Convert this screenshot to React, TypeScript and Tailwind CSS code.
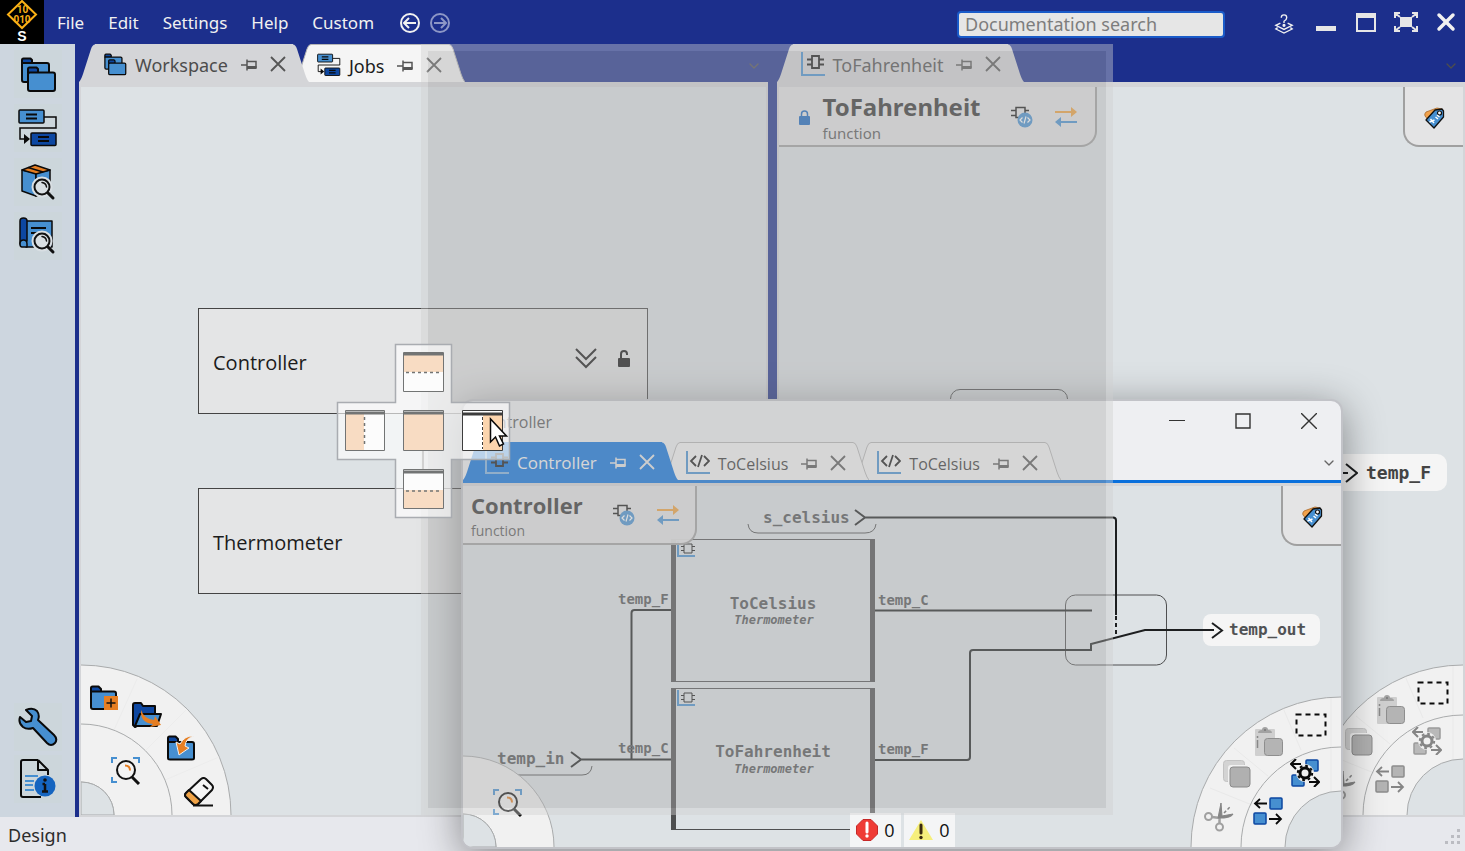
import type { ReactNode } from "react";
import { ChevronDown, X } from "lucide-react";

interface IconProps {
  className?: string;
}

const BLUE = "#468fd0";
const NAVY = "#0d47a1";
const ORANGE = "#e67e22";

/* ---------- icons ---------- */

function Logo() {
  return (
    <svg viewBox="0 0 44 44" className="h-11 w-11 bg-black">
      <path d="M22 1 36 14.500 22 28 8 14.500Z" fill="none" stroke="#fbb116" strokeWidth="2" />
      <g fill="#fbb116" fontFamily="Roboto, sans-serif" fontWeight="700" fontSize="10" textAnchor="middle">
        <text x="22.500" y="13">10</text>
        <text x="22" y="23">010</text>
      </g>
      <text x="22" y="41" textAnchor="middle" fill="#fff" fontFamily="Liberation Sans, sans-serif" fontWeight="700" fontSize="14">S</text>
    </svg>
  );
}

function FoldersIcon({ className }: IconProps) {
  return (
    <svg viewBox="0 0 38 38" className={className} stroke="#0a0a0a" strokeWidth="2" strokeLinejoin="round">
      <path d="M3 8V5q0-1.500 1.500-1.500h7L13 5v3z" fill={NAVY} />
      <path d="M3 8h25q2 0 2 2v17H5q-2 0-2-2z" fill={BLUE} />
      <path d="M9 18v-4q0-1.500 1.500-1.500h7L19 14v4z" fill={NAVY} />
      <path d="M11 17.500h23q2 0 2 2V34q0 2-2 2H11q-2 0-2-2V19.500q0-2 2-2z" fill={BLUE} />
    </svg>
  );
}

function JobsIcon({ className }: IconProps) {
  return (
    <svg viewBox="0 0 40 38" className={className} fill="none" stroke="#0a0a0a" strokeWidth="1.500">
      <path d="M26 8h12v11H2v11h5" />
      <rect x="1" y="1" width="25" height="13" rx="1" fill={BLUE} />
      <rect x="13" y="24" width="25" height="12.500" rx="1" fill={NAVY} />
      <path d="M8 5.500h11M8 9.500h11M20 28h11M20 32h11" strokeWidth="2" />
      <path d="M6 25v10l6-5z" fill="#0a0a0a" stroke="none" />
    </svg>
  );
}

function Lens({ halo }: { halo: string }) {
  return (
    <g fill="none" strokeLinecap="round">
      <circle cx="23" cy="24" r="9" stroke={halo} strokeWidth="3" />
      <circle cx="23" cy="24" r="7.500" fill={halo} stroke="#111" strokeWidth="2" />
      <path d="m29 30 5 5" stroke="#111" strokeWidth="3" />
      <path d="M23 19.500q4 .5 4.500 4.500" stroke="#111" strokeWidth="1.500" />
    </g>
  );
}

function BoxSearchIcon({ className }: IconProps) {
  return (
    <svg viewBox="0 0 38 38" className={className}>
      <g stroke="#0a0a0a" strokeWidth="1.500" strokeLinejoin="round">
        <path d="M3 7 17 10v23L3 28z" fill={BLUE} />
        <path d="M17 10 31 7v22l-14 4z" fill={BLUE} />
        <path d="M3 7 16 2l15 5-14 4z" fill={ORANGE} />
        <path d="m9 4.500 15 4.500" fill="none" />
      </g>
      <Lens halo="#d9dfe3" />
    </svg>
  );
}

function PlanSearchIcon({ className }: IconProps) {
  return (
    <svg viewBox="0 0 38 38" className={className}>
      <g stroke="#0a0a0a" strokeWidth="1.500" strokeLinejoin="round">
        <path d="M7 4h26v26H7z" fill={BLUE} />
        <path d="M1 27V4q0-3 3.500-3T8 4v20z" fill={NAVY} />
        <path d="M1 27q0-4 3.500-4T8 27v3H3q-2 0-2-3z" fill={BLUE} />
        <path d="M12 11h15M12 16h8" strokeWidth="2" />
      </g>
      <Lens halo="#d9dfe3" />
    </svg>
  );
}

function WrenchIcon({ className }: IconProps) {
  return (
    <svg viewBox="0 0 40 40" className={className}>
      <path
        d="M8 3q7-3 11 1 3 4 1 9l16 15q4 4 1 8-4 4-8 0L15 21q-6 2-10-1-5-4-3-10l6 5 5-1 1-5z"
        fill={BLUE}
        stroke="#0a0a0a"
        strokeWidth="2"
        strokeLinejoin="round"
      />
    </svg>
  );
}

function DocInfoIcon({ className }: IconProps) {
  return (
    <svg viewBox="0 0 38 40" className={className} fill="none">
      <path d="M19 1H4Q2 1 2 3v33q0 2 2 2h18M19 1l10 10v5M19 1v10h10" stroke="#0a0a0a" strokeWidth="2" strokeLinejoin="round" />
      <path d="M6 17h13M6 22h9M6 26h8M6 31h9" stroke={BLUE} strokeWidth="2" />
      <circle cx="26" cy="27" r="10.500" fill="#1565c0" />
      <path d="M26 25v8M23.500 25H26M23 32.500h6" stroke="#111" strokeWidth="2.500" />
      <circle cx="26" cy="21" r="1.800" fill="#111" />
    </svg>
  );
}

function PinIcon({ className }: IconProps) {
  return (
    <svg viewBox="0 0 16 14" className={className} fill="none" stroke="currentColor" strokeWidth="1.500">
      <path d="M0 7h6M6 1.500v11M6 3.500h9v6H6" />
      <path d="M6 9.500h9.500" strokeWidth="3" />
    </svg>
  );
}

function CloseIcon({ className }: IconProps) {
  return (
    <svg viewBox="0 0 16 16" className={className} stroke="currentColor" strokeWidth="1.800">
      <path d="m1 1 14 14M15 1 1 15" />
    </svg>
  );
}

function Chip() {
  return (
    <>
      <path d="M9 4h7v12H9z" />
      <path d="M4 7.500h5M4 12.500h5M16 7.500h5M16 12.500h5" />
    </>
  );
}

function FunctionIcon({ className, edge = BLUE }: IconProps & { edge?: string }) {
  return (
    <svg viewBox="0 0 24 24" className={className} fill="none">
      <path d="M1 0v23h23" stroke={edge} strokeWidth="2" />
      <g stroke="#151515" strokeWidth="1.800" transform="translate(2 0)">
        <Chip />
      </g>
    </svg>
  );
}

function CodeIcon({ className }: IconProps) {
  return (
    <svg viewBox="0 0 24 24" className={className} fill="none">
      <path d="M1 0v22h23" stroke={BLUE} strokeWidth="2" />
      <path d="m10 5-5 5 5 5M18 5l5 5-5 5M16 4l-4 12" stroke="#151515" strokeWidth="1.800" />
    </svg>
  );
}

function ChipCodeIcon() {
  return (
    <svg viewBox="0 0 22 22" className="h-[22px] w-[22px]" fill="none">
      <path d="M5 1.500h9v10H5zM0 4.500h5M0 9.500h5M14 4.500h4" stroke="#151515" strokeWidth="1.500" />
      <circle cx="14" cy="14" r="7.500" fill={BLUE} />
      <path d="m11.500 11.500-2.500 2.500 2.500 2.500m5-5 2.500 2.500-2.500 2.500M15 10.500l-2 7" stroke="#fff" strokeWidth="1.200" />
    </svg>
  );
}

function SwapArrowsIcon() {
  return (
    <svg viewBox="0 0 22 20" className="h-5 w-[22px]" fill="none" strokeWidth="2">
      <path d="M0 5h19" stroke="#f0a03c" />
      <path d="m16 0 6 5-6 5z" fill="#f0a03c" />
      <path d="M3 15h19" stroke={BLUE} />
      <path d="m6 10-6 5 6 5z" fill={BLUE} />
    </svg>
  );
}

function TagIcon() {
  return (
    <svg viewBox="0 0 22 22" className="h-[22px] w-[22px]" strokeLinejoin="round">
      <path d="M2 9q-1-2 1-4l11-4 5 1-12 13z" fill="#f0a14c" stroke="#a86a2c" strokeWidth=".8" />
      <path d="m3 13 9-10 7-1 1.500 2v6L11 21z" fill={BLUE} stroke="#111" strokeWidth="1.300" />
      <circle cx="16.500" cy="6" r="2" fill="#fff" stroke="#111" strokeWidth="1.200" />
      <path d="m7.500 12 3.500 4m-4.500-1 5-2m1-3 2.500 2m-1-4 2.500 2" stroke="#fff" strokeWidth="1.500" />
    </svg>
  );
}

function FolderPlusIcon() {
  return (
    <svg viewBox="0 0 30 26" className="h-[26px] w-[30px]" strokeLinejoin="round">
      <path d="M2 6V3q0-1.500 1.500-1.500h6L12 4v3H2z" fill={NAVY} stroke="#0a0a0a" strokeWidth="2" />
      <path d="M2 6.500h23q2 0 2 2V24H4q-2 0-2-2z" fill={BLUE} stroke="#0a0a0a" strokeWidth="2" />
      <path d="M15 11h14v14H15z" fill={ORANGE} />
      <path d="M22 13.500v9M17.500 18h9" stroke="#111" strokeWidth="1.500" />
    </svg>
  );
}

function FolderOpenIcon() {
  return (
    <svg viewBox="0 0 30 26" className="h-[26px] w-[30px]" strokeLinejoin="round">
      <path d="M1 23V3q0-2 2-2h6l2 3h12v10L3 25z" fill={NAVY} stroke="#0a0a0a" strokeWidth="2" />
      <path d="M8 12h21l-4 12H3z" fill={BLUE} stroke="#0a0a0a" strokeWidth="2" />
      <path d="M9 8q3 9 13 10l1-4 6 9-11 2 3-3Q8 21 9 8z" fill={ORANGE} />
    </svg>
  );
}

function FolderImportIcon() {
  return (
    <svg viewBox="0 0 30 26" className="h-[26px] w-[30px]" strokeLinejoin="round">
      <path d="M2 7V3q0-1.500 1.500-1.500h6L12 4v3z" fill={NAVY} stroke="#0a0a0a" strokeWidth="2" />
      <path d="M2 7h24q2 0 2 2v14q0 1.500-2 1.500H4q-2 0-2-1.500z" fill={BLUE} stroke="#0a0a0a" strokeWidth="2" />
      <path d="M28 1q-8 2-9 10l4 2-10 7-3-13 4 2Q19 0 28 1z" fill={ORANGE} stroke="#f1f1f1" />
    </svg>
  );
}

function EraserIcon() {
  return (
    <svg viewBox="0 0 32 30" className="h-[30px] w-8" strokeLinejoin="round" strokeWidth="2" stroke="#111">
      <path d="M18 2q3-2 5 0l6 6q2 2 0 5L15 27q-3 2-5 0l-7-7q-2-2 0-4z" fill="#f6f6f6" />
      <path d="m6 13 12 11-3 3q-3 2-5 0l-7-7q-2-2 0-4z" fill="#f0a347" />
      <path d="M10 28.500h20M20 8l5 4" fill="none" />
    </svg>
  );
}

function ZoomFitIcon() {
  return (
    <svg viewBox="0 0 30 28" className="h-7 w-[30px]" fill="none">
      <path d="M6 1H1v5M22 1h6v5M1 20v5h5" stroke={BLUE} strokeWidth="2" />
      <circle cx="15" cy="13" r="9" fill="#f4f4f4" stroke="#111" strokeWidth="2" />
      <path d="M14 8.500q5 0 5 5" stroke={ORANGE} strokeWidth="2" />
      <path d="m21 20 7 7" stroke="#111" strokeWidth="3" />
    </svg>
  );
}

function SelectIcon() {
  return (
    <svg viewBox="0 0 32 24" className="h-6 w-8">
      <path d="M1.500 1.500h29v21h-29z" fill="none" stroke="#0a0a0a" strokeWidth="2" strokeDasharray="5 4" />
    </svg>
  );
}

function PasteIcon() {
  return (
    <svg viewBox="0 0 28 30" className="h-[30px] w-7">
      <rect width="20" height="27" y="2" rx="1" fill="#cfcfcf" />
      <path d="M3 6q0-3 4-3 0-3 3-3t3 3q4 0 4 3z" fill="#a2a2a2" />
      <circle cx="10" cy="3" r="1" fill="#777" />
      <path d="M2.500 9v2m0 2v8" stroke="#888" strokeWidth="1.500" />
      <rect x="9.500" y="11.500" width="18" height="17" rx="3" fill="#b4b4b4" stroke="#8e8e8e" />
    </svg>
  );
}

function CopyIcon() {
  return (
    <svg viewBox="0 0 28 28" className="h-7 w-7">
      <rect x=".5" y=".5" width="21" height="21" rx="3" fill="#d3d3d3" stroke="#c2c2c2" />
      <rect x="5" y="5" width="22" height="22" rx="3" fill="#f1f1f1" />
      <rect x="7" y="7" width="20" height="20" rx="3" fill="#b0b0b0" stroke="#8a8a8a" />
    </svg>
  );
}

function CutIcon() {
  return (
    <svg viewBox="0 0 30 30" className="h-[30px] w-[30px]" fill="none" stroke="#a0a0a0" strokeWidth="2">
      <circle cx="4.500" cy="14.500" r="3.500" />
      <circle cx="15.500" cy="25" r="3.500" />
      <path d="m8 15 8 1M15.500 21V15" strokeWidth="2.500" />
      <path d="M14 16 17 1l1 13 11-2q-1 3-9 4z" fill="#858585" stroke="#858585" strokeWidth="1" />
      <path d="m20 11 6-6" strokeDasharray="3 2" strokeWidth="1.500" stroke="#858585" />
    </svg>
  );
}

function GearSwapIcon({ muted }: { muted?: boolean }) {
  const line = muted ? "#858585" : "#0a0a0a";
  const fill = muted ? "#b9b9b9" : BLUE;
  const edge = muted ? "#9a9a9a" : NAVY;
  return (
    <svg viewBox="0 0 30 28" className="h-7 w-[30px]" fill="none">
      <rect x="16" y="1" width="12" height="11" rx="1" fill={fill} stroke={edge} strokeWidth="1.500" />
      <rect x="2" y="16" width="12" height="11" rx="1" fill={fill} stroke={edge} strokeWidth="1.500" />
      <path d="M11 5H1m5-5L1 5l5 5M19 23h10m-5-5 5 5-5 5" stroke={line} strokeWidth="2" />
      <circle cx="15" cy="14" r="9" fill="#f1f1f1" />
      <circle cx="15" cy="14" r="5" stroke={line} strokeWidth="3" />
      <circle cx="15" cy="14" r="7.200" stroke={line} strokeWidth="2" strokeDasharray="2.800 2.850" />
    </svg>
  );
}

function SwapIcon({ muted }: { muted?: boolean }) {
  const line = muted ? "#858585" : "#0a0a0a";
  const fill = muted ? "#b4b4b4" : BLUE;
  const edge = muted ? "#8c8c8c" : NAVY;
  return (
    <svg viewBox="0 0 30 28" className="h-7 w-[30px]" fill="none">
      <rect x="17" y="1" width="12" height="11" rx="1" fill={fill} stroke={edge} strokeWidth="1.500" />
      <rect x="1" y="16" width="12" height="11" rx="1" fill={fill} stroke={edge} strokeWidth="1.500" />
      <path d="M14 6.500H2M7 2 2 6.500 7 11M16 22h12m-5-5 5 5-5 5" stroke={line} strokeWidth="1.800" />
    </svg>
  );
}

function ArrowCircle({ right }: { right?: boolean }) {
  return (
    <svg viewBox="0 0 20 20" className="h-5 w-5" fill="none" stroke="currentColor" strokeWidth="2">
      <circle cx="10" cy="10" r="9" />
      {right ? <path d="M4 10h12m-5-5 5 5-5 5" /> : <path d="M16 10H4m5-5-5 5 5 5" />}
    </svg>
  );
}

/* ---------- tabs ---------- */

interface TabProps {
  label: string;
  icon: ReactNode;
  fill: string;
  bg: string;
  text: string;
  tool?: string;
  stroke?: string;
  line?: string;
  z?: string;
  font?: string;
  pad?: string;
}

function Tab({
  label,
  icon,
  fill,
  bg,
  text,
  tool = "text-[#555]",
  stroke = "none",
  line = "",
  z = "",
  font = "text-lg",
  pad = "pl-2",
}: TabProps) {
  return (
    <div className={`relative flex h-[38px] not-first:-ml-[14px] ${z}`}>
      <svg viewBox="0 0 16 38" className="h-[38px] w-4 shrink-0">
        <path d="M0 38Q2 36 4 30L12 5Q13.500 .5 16 .5V38" fill={fill} />
        <path d="M0 38Q2 36 4 30L12 5Q13.500 .5 16 .5" fill="none" stroke={stroke} />
      </svg>
      <div className={`flex items-center pt-0.5 pr-[7px] ${pad} ${bg} ${line}`}>
        {icon}
        <span className={`mt-0.5 ml-2 leading-6 ${font} ${text}`}>{label}</span>
        <button aria-label={`Pin ${label}`} className={`mt-0.5 ml-[13px] ${tool}`}>
          <PinIcon className="h-[14px] w-4" />
        </button>
        <button aria-label={`Close ${label}`} className={`ml-[13px] ${tool}`}>
          <CloseIcon className="h-4 w-4" />
        </button>
      </div>
      <svg viewBox="0 0 16 38" className="h-[38px] w-4 shrink-0">
        <path d="M0 .5Q2.500 .5 4 5L12 30Q14 36 16 38H0" fill={fill} />
        <path d="M0 .5Q2.500 .5 4 5L12 30Q14 36 16 38" fill="none" stroke={stroke} />
      </svg>
    </div>
  );
}

/* ---------- canvas pieces ---------- */

function TagCard() {
  return (
    <div className="absolute top-0 right-0 flex h-[60px] w-[60px] items-center justify-center rounded-bl-2xl border-b-2 border-l-2 border-[#a0a0a0] bg-[#e4e4e5] pt-1">
      <button aria-label="Tags"><TagIcon /></button>
    </div>
  );
}

function LeftWheel({ full }: { full?: boolean }) {
  return (
    <div className="absolute bottom-0 left-0 h-[151px] w-[151px]">
      <svg viewBox="0 0 151 151" className="h-full w-full" fill="none" stroke="#a9abac">
        {full && <path d="M0 1A150 150 0 0 1 150 151H0Z" fill="#f1f1f1" stroke="none" />}
        {full && <path d="M0 1A150 150 0 0 1 150 151" />}
        {full && <path d="m33 66 23-51M65 86l40-40M84 116l54-23" stroke="#ececec" />}
        <path d="M0 60A91 91 0 0 1 91 151H33A33 33 0 0 0 0 118Z" fill="#f1f1f1" stroke="none" />
        <path d="M0 60A91 91 0 0 1 91 151M0 118A33 33 0 0 1 33 151" />
        <path d="M0 118A33 33 0 0 1 33 151H0Z" fill="#dde2e5" />
      </svg>
      <button aria-label="Zoom to fit" className="absolute top-[93px] left-[30px]"><ZoomFitIcon /></button>
      {full && (
        <>
          <button aria-label="New project" className="absolute top-[21px] left-2"><FolderPlusIcon /></button>
          <button aria-label="Open project" className="absolute top-[38px] left-[51px]"><FolderOpenIcon /></button>
          <button aria-label="Import project" className="absolute top-[71px] left-[85px]"><FolderImportIcon /></button>
          <button aria-label="Erase" className="absolute top-[113px] left-[102px]"><EraserIcon /></button>
        </>
      )}
    </div>
  );
}

function RightWheel({ muted }: { muted?: boolean }) {
  return (
    <div className="absolute right-0 bottom-0 h-[151px] w-[151px]">
      <svg viewBox="0 0 151 151" className="h-full w-full" fill="none" stroke="#a9abac">
        <path d="M151 1A150 150 0 0 0 1 151H95A56 56 0 0 1 151 95Z" fill="#f1f1f1" stroke="none" />
        <path d="m20 92 42 17M44 52l34 28M93 12l18 42M141 1v94" stroke="#e9e9e9" />
        <path d="M151 1A150 150 0 0 0 1 151M151 51A100 100 0 0 0 51 151M151 95A56 56 0 0 0 95 151" />
      </svg>
      <button aria-label="Select" className="absolute top-[17px] left-[105px]"><SelectIcon /></button>
      <button aria-label="Paste" className="absolute top-[31px] left-[65px]"><PasteIcon /></button>
      <button aria-label="Copy" className="absolute top-[64px] left-[33px]"><CopyIcon /></button>
      <button aria-label="Cut" className="absolute top-[106px] left-[14px]"><CutIcon /></button>
      <button aria-label="Settings" className="absolute top-[63px] left-[100px]"><GearSwapIcon muted={muted} /></button>
      <button aria-label="Swap" className="absolute top-[101px] left-[63px]"><SwapIcon muted={muted} /></button>
    </div>
  );
}

function BlockCorner({ x, y }: { x: number; y: number }) {
  return (
    <g transform={`translate(${x} ${y})`} fill="none">
      <path d="M1 0v15h17" stroke={BLUE} strokeWidth="2" />
      <path d="M7 3h8v9H7zM4 5.500h3M4 9.500h3M15 5.500h3M15 9.500h3" stroke="#151515" />
    </g>
  );
}

function Diagram() {
  return (
    <svg width="878" height="361" viewBox="0 0 878 361" fill="none" className="absolute top-0 left-0 max-w-none">
      <rect x="740" y="128" width="117" height="32" rx="8" fill="#f5f5f5" />
      <g stroke="#4e4f50">
        <path d="M285 38q1 9 10 9h107q10 0 11-9M20 280q1 9 10 9h89q9 0 10-9" />
        <rect x="602.500" y="109" width="101" height="70" rx="10" />
        <path d="M208 53.500h204M208 195.500h204M208 202.500h204M208 343.500h204" />
        <path d="M210.500 53v143M409.500 53v143M210.500 202v142M409.500 202v142" strokeWidth="5" />
      </g>
      <g stroke="#1d1f20" strokeWidth="2">
        <path d="m392 24 10 7.500-10 7.500M402 31.500h248q3 0 3 3V129" />
        <path d="M653 130v20" strokeDasharray="4 3" />
        <path d="m108 266 10 7.500-10 7.500M118 273.500h90M168.500 273V127q0-3 3-3H208" />
        <path d="M412 124.500h217M412 274h92q3 0 3-3V167q0-3 3-3h118v-6l54-14h69m-2-7 10 7.500-10 7.500" />
      </g>
      <BlockCorner x={214} y={55} />
      <BlockCorner x={214} y={204} />
      <g fill="#505254" fontFamily="DejaVu Sans Mono, monospace" fontWeight="700">
        <g fontSize="16">
          <text x="300" y="37">s_celsius</text>
          <text x="34" y="278">temp_in</text>
          <text x="766" y="149">temp_out</text>
          <text x="310" y="123" textAnchor="middle">ToCelsius</text>
          <text x="310" y="271" textAnchor="middle">ToFahrenheit</text>
        </g>
        <g fontSize="14">
          <text x="155" y="118">temp_F</text>
          <text x="415" y="119">temp_C</text>
          <text x="155" y="267">temp_C</text>
          <text x="415" y="268">temp_F</text>
        </g>
        <g fontSize="12" fontStyle="italic">
          <text x="311" y="138" textAnchor="middle">Thermometer</text>
          <text x="311" y="287" textAnchor="middle">Thermometer</text>
        </g>
      </g>
    </svg>
  );
}

/* ---------- panes ---------- */

function JobNode({ name, children, className }: { name: string; children?: ReactNode; className: string }) {
  return (
    <div className={`absolute left-[117px] flex h-[106px] w-[450px] items-center border border-[#444] bg-[#e4e5e6] pr-4 pl-[14px] ${className}`}>
      <span className="mt-1 font-['Open_Sans',sans-serif] text-xl text-[#1c1c1c]">{name}</span>
      <div className="mb-1 ml-auto flex items-center gap-5">{children}</div>
    </div>
  );
}

function WorkspacePane() {
  return (
    <section className="flex min-w-0 flex-1 flex-col">
      <div className="flex h-[38px] items-center">
        <Tab label="Workspace" icon={<FoldersIcon className="h-6 w-6" />} fill="#d4d5d8" bg="bg-[#d4d5d8]" text="text-[#4c4c4c]" z="z-10" />
        <Tab
          label="Jobs"
          icon={<JobsIcon className="h-6 w-6" />}
          fill="#f5f5f5"
          bg="bg-[#f5f5f5]"
          text="text-[#1c1c1c]"
          stroke="#b5b5b5"
          line="border-t border-[#b5b5b5]"
          pad="pl-1.5"
        />
        <button aria-label="Tab list" className="mt-1.5 mr-1.5 ml-auto text-[#4d4d4d]"><ChevronDown className="h-4 w-4" /></button>
      </div>
      <div className="flex-1 border-x-2 border-t-[5px] border-b-2 border-[#d4d5d8] bg-[#dde2e5]">
        <div className="relative h-full overflow-hidden">
          <JobNode name="Controller" className="top-[221px]">
            <button aria-label="Expand">
              <svg viewBox="0 0 22 22" className="h-[22px] w-[22px]" fill="none" stroke="#151515" strokeWidth="2">
                <path d="m1 1 10 10L21 1M1 9l10 10L21 9" />
              </svg>
            </button>
            <button aria-label="Unlock">
              <svg viewBox="0 0 14 18" className="h-[18px] w-[14px]">
                <rect x="1" y="8" width="12" height="9" rx="1" fill="#111" />
                <path d="M4 8V4q0-3 3-3t3 3v1" fill="none" stroke="#111" strokeWidth="2" />
              </svg>
            </button>
          </JobNode>
          <svg viewBox="0 0 16 76" className="absolute top-[327px] left-[334px] h-[76px] w-4" fill="none" stroke="#555" strokeWidth="2">
            <path d="M8 0v74M2 62l6 12 6-12" />
          </svg>
          <JobNode name="Thermometer" className="top-[401px]" />
          <LeftWheel full />
        </div>
      </div>
    </section>
  );
}

function FahrenheitPane() {
  return (
    <section className="flex min-w-0 flex-1 flex-col">
      <div className="flex h-[38px] items-center">
        <Tab label="ToFahrenheit" icon={<FunctionIcon className="h-6 w-6" />} fill="#d4d5d8" bg="bg-[#d4d5d8]" text="text-[#4c4c4c]" />
        <button aria-label="Tab list" className="mt-1.5 mr-1.5 ml-auto text-[#4d4d4d]"><ChevronDown className="h-4 w-4" /></button>
      </div>
      <div className="flex-1 border-x-2 border-t-[5px] border-b-2 border-[#d4d5d8] bg-[#dde2e5]">
        <div className="relative h-full overflow-hidden">
          <div className="flex h-[60px] w-fit items-center rounded-br-2xl border-r-2 border-b-2 border-[#a0a0a0] bg-[#e4e4e5] pt-0.5 pr-[18px] pl-5">
            <svg viewBox="0 0 12 16" className="mt-0.5 h-4 w-3">
              <rect y="6" width="11" height="9" rx="1" fill="#1565c0" />
              <path d="M2.500 7V4q0-3 3-3t3 3v3" fill="none" stroke="#1565c0" strokeWidth="1.500" />
            </svg>
            <div className="mr-[30px] ml-3">
              <h2 className="text-2xl leading-8 font-bold text-[#333]">ToFahrenheit</h2>
              <p className="text-[15px] leading-5 text-[#555]">function</p>
            </div>
            <div className="flex items-center gap-[22px]">
              <button aria-label="Implementation"><ChipCodeIcon /></button>
              <button aria-label="Interface"><SwapArrowsIcon /></button>
            </div>
          </div>
          <TagCard />
          <div className="absolute top-[302px] left-[171px] h-[60px] w-[118px] rounded-[10px] border border-[#4e4f50]" />
          <div className="absolute top-[367px] right-4 flex h-[37px] items-center rounded-[10px] bg-[#f5f5f5] pr-4">
            <svg viewBox="0 0 40 20" className="mr-2 h-5 w-10" fill="none" stroke="#1d1f20" strokeWidth="2">
              <path d="M0 10h30M28 1l11 9-11 9" />
            </svg>
            <span className="font-['DejaVu_Sans_Mono',monospace] text-lg font-bold text-[#444]">temp_F</span>
          </div>
          <RightWheel muted />
        </div>
      </div>
    </section>
  );
}

function FloatingWindow() {
  return (
    <section className="absolute top-[399px] left-[461px] flex h-[450px] w-[882px] flex-col overflow-hidden rounded-xl border-2 border-[#c2c3c8] bg-[#eeeff2] font-['Open_Sans',sans-serif] shadow-[0_8px_40px_rgba(0,0,0,0.42)]">
      <div className="flex h-[41px] items-center pr-6 pl-[14px] text-[#333]">
        <span className="text-base text-[#555]">Controller</span>
        <div className="mb-0.5 ml-auto flex items-center gap-[50px]">
          <button aria-label="Minimize" className="flex h-4 w-4 items-center"><span className="h-px w-4 bg-[#333]" /></button>
          <button aria-label="Maximize">
            <svg viewBox="0 0 16 16" className="h-4 w-4">
              <path d="M1 1h14v14H1z" fill="none" stroke="#333" strokeWidth="1.400" />
            </svg>
          </button>
          <button aria-label="Close window">
            <svg viewBox="0 0 16 16" className="h-4 w-4" stroke="#333" strokeWidth="1.400">
              <path d="m0 0 16 16M16 0 0 16" />
            </svg>
          </button>
        </div>
      </div>
      <div className="flex items-center">
        <Tab
          label="Controller"
          icon={<FunctionIcon className="h-6 w-6" edge="#7fb0df" />}
          fill="#0a70dc"
          bg="bg-[#0a70dc]"
          text="text-[#f4f4f4]"
          tool="text-[#e6e6e6]"
          z="z-20"
          font="text-[17px]"
          pad="pl-1.5"
        />
        <Tab label="ToCelsius" icon={<CodeIcon className="h-6 w-6" />} fill="#f5f5f5" bg="bg-[#f5f5f5]" text="text-[#333]" stroke="#b5b5b5" line="border-t border-[#b5b5b5]" z="z-10" font="text-base" pad="pl-1.5" />
        <Tab label="ToCelsius" icon={<CodeIcon className="h-6 w-6" />} fill="#f5f5f5" bg="bg-[#f5f5f5]" text="text-[#333]" stroke="#b5b5b5" line="border-t border-[#b5b5b5]" font="text-base" pad="pl-1.5" />
        <button aria-label="Tab list" className="mt-1 mr-1 ml-auto text-[#666]"><ChevronDown className="h-4 w-4" /></button>
      </div>
      <div className="flex-1 border-t-[3px] border-[#0a70dc] bg-[#d4d5d8] pt-[3px]">
        <div className="relative h-full overflow-hidden bg-[#dde2e5]">
          <Diagram />
          <div className="relative flex h-[59px] w-fit items-center rounded-br-2xl border-r-2 border-b-2 border-[#a0a0a0] bg-[#e4e4e5]/95 pr-4 pl-2">
            <div className="mr-[30px]">
              <h2 className="text-[22px] leading-8 font-bold text-[#333]">Controller</h2>
              <p className="text-sm leading-5 text-[#555]">function</p>
            </div>
            <div className="flex items-center gap-[22px]">
              <button aria-label="Implementation"><ChipCodeIcon /></button>
              <button aria-label="Interface"><SwapArrowsIcon /></button>
            </div>
          </div>
          <TagCard />
          <LeftWheel />
          <RightWheel />
          <div className="absolute bottom-0 left-[387px] flex gap-[3px] text-lg text-[#111]">
            <div className="flex h-[34px] w-[51px] items-center justify-center gap-[6px] bg-[#f4f5f6]">
              <svg viewBox="0 0 22 22" className="h-[22px] w-[22px]">
                <path d="M7 .5h8L21.500 7v8L15 21.500H7L.5 15V7z" fill="#ef3b35" stroke="#c62828" />
                <path d="M11 4v9" stroke="#fff" strokeWidth="3" strokeLinecap="round" />
                <circle cx="11" cy="17" r="1.700" fill="#fff" />
              </svg>
              0
            </div>
            <div className="flex h-[34px] w-[51px] items-center justify-center gap-[6px] bg-[#f4f5f6]">
              <svg viewBox="0 0 24 22" className="h-[22px] w-6">
                <path d="m12 1 12 20H0z" fill="#f6ef7c" />
                <path d="M12 6v8" stroke="#3a2a10" strokeWidth="3" strokeLinecap="round" />
                <circle cx="12" cy="18.500" r="1.700" fill="#3a2a10" />
              </svg>
              0
            </div>
          </div>
        </div>
      </div>
    </section>
  );
}

/* ---------- docking guide ---------- */

function DockGuide() {
  return (
    <svg viewBox="0 0 176 176" className="absolute top-[343px] left-[336px] h-44 w-44" fill="none">
      <path d="M59.500 1.500h56v58h58v57h-58v58h-56v-58h-58v-57h58z" fill="#fff" fillOpacity=".62" stroke="#a9acb1" strokeWidth="1.500" />
      <g stroke="#727474">
        <path d="M67.500 9.500h40v39h-40zM9.500 67.500h39v40h-39zM67.500 67.500h40v40h-40zM67.500 126.500h40v39h-40z" fill="#fcfcfc" />
        <path d="M68 12h39v17H68zM10 71h18v36H10zM68 71h39v36H68zM68 147h39v18H68z" fill="#f8dcc3" stroke="none" />
        <path d="M68 11h39M10 70h38M68 70h39M68 129h39" strokeWidth="3" />
        <path d="M70 29.500h36M70 148h36M28.500 74v30" strokeDasharray="3 3" strokeWidth="1.500" />
      </g>
      <path d="M126.500 67.500h40v40h-40z" fill="#fff" stroke="#3c3c3c" />
      <path d="M147 71h19v36h-19z" fill="#fcd5ae" />
      <path d="M127 71h39" stroke="#3c3c3c" strokeWidth="3" />
      <path d="M146.500 74v32" stroke="#3c3c3c" strokeDasharray="3 2" />
      <path d="M154.500 76v23l5-5 4 9 4-2-4-8h7z" fill="#fff" stroke="#0a0a0a" strokeWidth="1.500" />
    </svg>
  );
}

/* ---------- chrome ---------- */

function Header() {
  return (
    <header className="flex h-11 items-center text-[#f1f1f1]">
      <Logo />
      <nav className="ml-[13px] flex items-center gap-6 pt-px text-[17px]">
        <button>File</button>
        <button>Edit</button>
        <button>Settings</button>
        <button>Help</button>
        <button>Custom</button>
        <div className="ml-0.5 flex gap-[10px]">
          <button aria-label="Back"><ArrowCircle /></button>
          <button aria-label="Forward" className="text-[#8d97c6]"><ArrowCircle right /></button>
        </div>
      </nav>
      <input
        type="text"
        aria-label="Documentation search"
        placeholder="Documentation search"
        className="mt-1 ml-auto h-[27px] w-[268px] rounded border-2 border-[#1a5bc9] bg-[#e6e6e6] px-[6px] text-lg leading-6 placeholder:text-[#7d7d7d]"
      />
      <div className="mr-[9px] ml-[49px] flex items-center gap-[18px]">
        <button aria-label="Documentation" className="mt-1 mr-1">
          <svg viewBox="0 0 20 22" className="h-5 w-5" fill="none" stroke="currentColor" strokeWidth="1.500">
            <path d="M6 10 1 12.500 10 17l9-4.500L14 10M3 15l-2 1.500L10 21l9-4.500L17 15M7 4q0-3 3-3t3 3q0 2-3 4v2" />
            <circle cx="10" cy="12.500" r="1" fill="currentColor" />
          </svg>
        </button>
        <button aria-label="Minimize" className="mr-0.5 flex h-5 w-5 items-end pb-px"><span className="h-[5px] w-5 bg-[#e6e6e6]" /></button>
        <button aria-label="Maximize" className="h-[19px] w-5 border-2 border-t-[5px] border-[#e6e6e6]" />
        <button aria-label="Full screen">
          <svg viewBox="0 0 24 20" className="h-5 w-6" fill="none" stroke="#e6e6e6" strokeWidth="2">
            <path d="M1 6V1h5M18 1h5v5M23 14v5h-5M6 19H1v-5M2 2l4 3M22 2l-4 3M2 18l4-3M22 18l-4-3" />
            <path d="M7 6h10v8H7z" fill="#e6e6e6" />
          </svg>
        </button>
        <button aria-label="Close"><X className="-mx-1 h-7 w-7" strokeWidth={3} /></button>
      </div>
    </header>
  );
}

function SideButton({ label, children }: { label: string; children: ReactNode }) {
  return (
    <button aria-label={label} className="flex h-12 w-12 items-center justify-center bg-[#ccd6db]">
      {children}
    </button>
  );
}

function Sidebar() {
  return (
    <aside className="mr-1 flex w-[75px] shrink-0 flex-col items-center gap-[6px] bg-[#cdd6df] pt-[6px] pb-[14px]">
      <SideButton label="Workspace"><FoldersIcon className="h-[38px] w-[38px]" /></SideButton>
      <SideButton label="Jobs"><JobsIcon className="h-[38px] w-10" /></SideButton>
      <SideButton label="Browse packages"><BoxSearchIcon className="h-[38px] w-[38px]" /></SideButton>
      <SideButton label="Browse plans"><PlanSearchIcon className="h-[38px] w-[38px]" /></SideButton>
      <div className="mt-auto flex flex-col gap-1">
        <SideButton label="Tools"><WrenchIcon className="h-10 w-10" /></SideButton>
        <SideButton label="Document info"><DocInfoIcon className="h-10 w-[38px]" /></SideButton>
      </div>
    </aside>
  );
}

export default function App() {
  return (
    <div className="relative flex h-screen flex-col overflow-hidden bg-[#1c2f8c] font-['Noto_Sans',sans-serif]">
      <Header />
      <main className="flex min-h-0 flex-1">
        <Sidebar />
        <WorkspacePane />
        <div className="w-[9px] shrink-0" />
        <FahrenheitPane />
      </main>
      <footer className="flex h-[34px] items-center justify-between bg-[#e7e8ed] px-2 pt-0.5 text-lg text-[#2c2c2c]">
        <span>Design</span>
        <svg viewBox="0 0 16 16" className="-mr-1 mt-1 h-4 w-4" fill="#bbbcc2">
          <path d="M12 0h3v3h-3zM6 6h3v3H6zM12 6h3v3h-3zM0 12h3v3H0zM6 12h3v3H6zM12 12h3v3h-3z" />
        </svg>
      </footer>

      <FloatingWindow />
      {/* drop preview over the right half */}
      <div className="pointer-events-none absolute top-11 left-[421px] z-30 h-[771px] w-[692px] border-x-[7px] border-y-[7px] border-[rgb(207_207_207/0.42)] bg-[rgb(171_171_171/0.42)] bg-clip-padding" />
      <div className="pointer-events-none absolute inset-0 z-40">
        <DockGuide />
      </div>
    </div>
  );
}
